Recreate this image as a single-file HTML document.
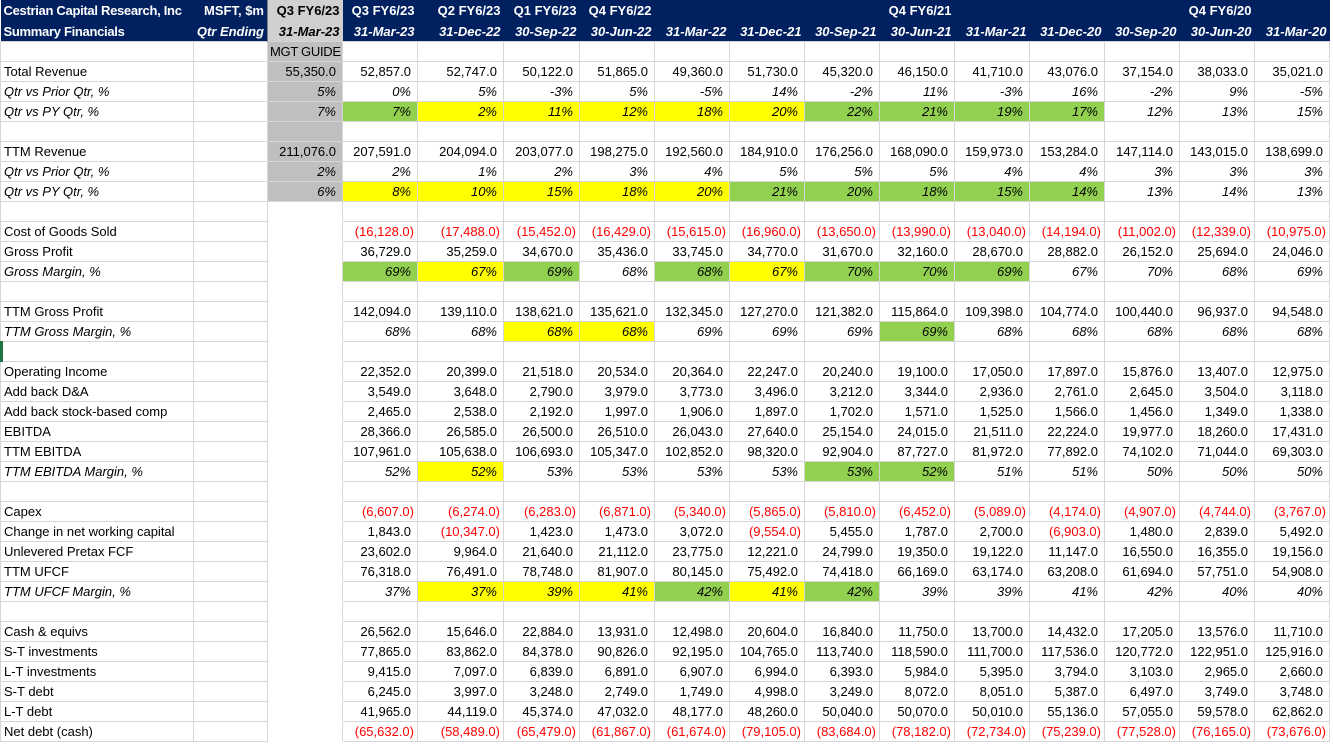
<!DOCTYPE html>
<html><head><meta charset="utf-8">
<style>
html,body{margin:0;padding:0;background:#fff;width:1333px;height:745px;overflow:hidden}
table{border-collapse:collapse;table-layout:fixed;width:1329px;font-family:"Liberation Sans",Arial,sans-serif;font-size:13px;color:#000}
td{border:1px solid #d6d6d6;height:19px;line-height:19px;padding:0 6px 0 2px;text-align:right;white-space:nowrap;overflow:hidden}
td:first-child{text-align:left;padding-left:3px}
tr.h td{background:#002060;color:#fff;font-weight:bold;border:none;padding-right:3px}
tr.h td:first-child{letter-spacing:-0.3px}
tr.h1 td{height:21px;line-height:22px}
tr.h2 td{font-style:italic;line-height:18px}
tr.h td.gh{background:#d0d0d0;color:#000;border-left:1px solid #808080}
td.gb{background:#bfbfbf;border-left:1px solid #808080}
td.gm{text-align:left;padding:0 0 0 2px;letter-spacing:-0.3px}
td.gn{border-left:1px solid #808080;border-top-color:#fff;border-bottom-color:#fff}
tr.i td{font-style:italic}
.g{background:#92d050}
.y{background:#ffff00}
.r{color:#ff0000;padding-right:3px}
#cur{position:absolute;left:0;top:341px;width:3px;height:21px;background:#217346}
</style></head><body>
<div id="cur"></div>
<table>
<colgroup><col style="width:193px"><col style="width:74px"><col style="width:75px"><col style="width:75px"><col style="width:86px"><col style="width:76px"><col style="width:75px"><col style="width:75px"><col style="width:75px"><col style="width:75px"><col style="width:75px"><col style="width:75px"><col style="width:75px"><col style="width:75px"><col style="width:75px"><col style="width:75px"></colgroup>
<tr class="h h1"><td>Cestrian Capital Research, Inc</td><td>MSFT, $m</td><td class="gh">Q3 FY6/23</td><td>Q3 FY6/23</td><td>Q2 FY6/23</td><td>Q1 FY6/23</td><td>Q4 FY6/22</td><td></td><td></td><td></td><td>Q4 FY6/21</td><td></td><td></td><td></td><td>Q4 FY6/20</td><td></td></tr>
<tr class="h h2"><td style="font-style:normal">Summary Financials</td><td>Qtr Ending</td><td class="gh">31-Mar-23</td><td>31-Mar-23</td><td>31-Dec-22</td><td>30-Sep-22</td><td>30-Jun-22</td><td>31-Mar-22</td><td>31-Dec-21</td><td>30-Sep-21</td><td>30-Jun-21</td><td>31-Mar-21</td><td>31-Dec-20</td><td>30-Sep-20</td><td>30-Jun-20</td><td>31-Mar-20</td></tr>
<tr><td></td><td></td><td class="gb gm">MGT GUIDE</td><td></td><td></td><td></td><td></td><td></td><td></td><td></td><td></td><td></td><td></td><td></td><td></td><td></td></tr>
<tr><td>Total Revenue</td><td></td><td class="gb">55,350.0</td><td>52,857.0</td><td>52,747.0</td><td>50,122.0</td><td>51,865.0</td><td>49,360.0</td><td>51,730.0</td><td>45,320.0</td><td>46,150.0</td><td>41,710.0</td><td>43,076.0</td><td>37,154.0</td><td>38,033.0</td><td>35,021.0</td></tr>
<tr class="i"><td>Qtr vs Prior Qtr, %</td><td></td><td class="gb">5%</td><td>0%</td><td>5%</td><td>-3%</td><td>5%</td><td>-5%</td><td>14%</td><td>-2%</td><td>11%</td><td>-3%</td><td>16%</td><td>-2%</td><td>9%</td><td>-5%</td></tr>
<tr class="i"><td>Qtr vs PY Qtr, %</td><td></td><td class="gb">7%</td><td class="g">7%</td><td class="y">2%</td><td class="y">11%</td><td class="y">12%</td><td class="y">18%</td><td class="y">20%</td><td class="g">22%</td><td class="g">21%</td><td class="g">19%</td><td class="g">17%</td><td>12%</td><td>13%</td><td>15%</td></tr>
<tr><td></td><td></td><td class="gb"></td><td></td><td></td><td></td><td></td><td></td><td></td><td></td><td></td><td></td><td></td><td></td><td></td><td></td></tr>
<tr><td>TTM Revenue</td><td></td><td class="gb">211,076.0</td><td>207,591.0</td><td>204,094.0</td><td>203,077.0</td><td>198,275.0</td><td>192,560.0</td><td>184,910.0</td><td>176,256.0</td><td>168,090.0</td><td>159,973.0</td><td>153,284.0</td><td>147,114.0</td><td>143,015.0</td><td>138,699.0</td></tr>
<tr class="i"><td>Qtr vs Prior Qtr, %</td><td></td><td class="gb">2%</td><td>2%</td><td>1%</td><td>2%</td><td>3%</td><td>4%</td><td>5%</td><td>5%</td><td>5%</td><td>4%</td><td>4%</td><td>3%</td><td>3%</td><td>3%</td></tr>
<tr class="i"><td>Qtr vs PY Qtr, %</td><td></td><td class="gb">6%</td><td class="y">8%</td><td class="y">10%</td><td class="y">15%</td><td class="y">18%</td><td class="y">20%</td><td class="g">21%</td><td class="g">20%</td><td class="g">18%</td><td class="g">15%</td><td class="g">14%</td><td>13%</td><td>14%</td><td>13%</td></tr>
<tr><td></td><td></td><td class="gn"></td><td></td><td></td><td></td><td></td><td></td><td></td><td></td><td></td><td></td><td></td><td></td><td></td><td></td></tr>
<tr><td>Cost of Goods Sold</td><td></td><td class="gn"></td><td class="r">(16,128.0)</td><td class="r">(17,488.0)</td><td class="r">(15,452.0)</td><td class="r">(16,429.0)</td><td class="r">(15,615.0)</td><td class="r">(16,960.0)</td><td class="r">(13,650.0)</td><td class="r">(13,990.0)</td><td class="r">(13,040.0)</td><td class="r">(14,194.0)</td><td class="r">(11,002.0)</td><td class="r">(12,339.0)</td><td class="r">(10,975.0)</td></tr>
<tr><td>Gross Profit</td><td></td><td class="gn"></td><td>36,729.0</td><td>35,259.0</td><td>34,670.0</td><td>35,436.0</td><td>33,745.0</td><td>34,770.0</td><td>31,670.0</td><td>32,160.0</td><td>28,670.0</td><td>28,882.0</td><td>26,152.0</td><td>25,694.0</td><td>24,046.0</td></tr>
<tr class="i"><td>Gross Margin, %</td><td></td><td class="gn"></td><td class="g">69%</td><td class="y">67%</td><td class="g">69%</td><td>68%</td><td class="g">68%</td><td class="y">67%</td><td class="g">70%</td><td class="g">70%</td><td class="g">69%</td><td>67%</td><td>70%</td><td>68%</td><td>69%</td></tr>
<tr><td></td><td></td><td class="gn"></td><td></td><td></td><td></td><td></td><td></td><td></td><td></td><td></td><td></td><td></td><td></td><td></td><td></td></tr>
<tr><td>TTM Gross Profit</td><td></td><td class="gn"></td><td>142,094.0</td><td>139,110.0</td><td>138,621.0</td><td>135,621.0</td><td>132,345.0</td><td>127,270.0</td><td>121,382.0</td><td>115,864.0</td><td>109,398.0</td><td>104,774.0</td><td>100,440.0</td><td>96,937.0</td><td>94,548.0</td></tr>
<tr class="i"><td>TTM Gross Margin, %</td><td></td><td class="gn"></td><td>68%</td><td>68%</td><td class="y">68%</td><td class="y">68%</td><td>69%</td><td>69%</td><td>69%</td><td class="g">69%</td><td>68%</td><td>68%</td><td>68%</td><td>68%</td><td>68%</td></tr>
<tr><td></td><td></td><td class="gn"></td><td></td><td></td><td></td><td></td><td></td><td></td><td></td><td></td><td></td><td></td><td></td><td></td><td></td></tr>
<tr><td>Operating Income</td><td></td><td class="gn"></td><td>22,352.0</td><td>20,399.0</td><td>21,518.0</td><td>20,534.0</td><td>20,364.0</td><td>22,247.0</td><td>20,240.0</td><td>19,100.0</td><td>17,050.0</td><td>17,897.0</td><td>15,876.0</td><td>13,407.0</td><td>12,975.0</td></tr>
<tr><td>Add back D&amp;A</td><td></td><td class="gn"></td><td>3,549.0</td><td>3,648.0</td><td>2,790.0</td><td>3,979.0</td><td>3,773.0</td><td>3,496.0</td><td>3,212.0</td><td>3,344.0</td><td>2,936.0</td><td>2,761.0</td><td>2,645.0</td><td>3,504.0</td><td>3,118.0</td></tr>
<tr><td>Add back stock-based comp</td><td></td><td class="gn"></td><td>2,465.0</td><td>2,538.0</td><td>2,192.0</td><td>1,997.0</td><td>1,906.0</td><td>1,897.0</td><td>1,702.0</td><td>1,571.0</td><td>1,525.0</td><td>1,566.0</td><td>1,456.0</td><td>1,349.0</td><td>1,338.0</td></tr>
<tr><td>EBITDA</td><td></td><td class="gn"></td><td>28,366.0</td><td>26,585.0</td><td>26,500.0</td><td>26,510.0</td><td>26,043.0</td><td>27,640.0</td><td>25,154.0</td><td>24,015.0</td><td>21,511.0</td><td>22,224.0</td><td>19,977.0</td><td>18,260.0</td><td>17,431.0</td></tr>
<tr><td>TTM EBITDA</td><td></td><td class="gn"></td><td>107,961.0</td><td>105,638.0</td><td>106,693.0</td><td>105,347.0</td><td>102,852.0</td><td>98,320.0</td><td>92,904.0</td><td>87,727.0</td><td>81,972.0</td><td>77,892.0</td><td>74,102.0</td><td>71,044.0</td><td>69,303.0</td></tr>
<tr class="i"><td>TTM EBITDA Margin, %</td><td></td><td class="gn"></td><td>52%</td><td class="y">52%</td><td>53%</td><td>53%</td><td>53%</td><td>53%</td><td class="g">53%</td><td class="g">52%</td><td>51%</td><td>51%</td><td>50%</td><td>50%</td><td>50%</td></tr>
<tr><td></td><td></td><td class="gn"></td><td></td><td></td><td></td><td></td><td></td><td></td><td></td><td></td><td></td><td></td><td></td><td></td><td></td></tr>
<tr><td>Capex</td><td></td><td class="gn"></td><td class="r">(6,607.0)</td><td class="r">(6,274.0)</td><td class="r">(6,283.0)</td><td class="r">(6,871.0)</td><td class="r">(5,340.0)</td><td class="r">(5,865.0)</td><td class="r">(5,810.0)</td><td class="r">(6,452.0)</td><td class="r">(5,089.0)</td><td class="r">(4,174.0)</td><td class="r">(4,907.0)</td><td class="r">(4,744.0)</td><td class="r">(3,767.0)</td></tr>
<tr><td>Change in net working capital</td><td></td><td class="gn"></td><td>1,843.0</td><td class="r">(10,347.0)</td><td>1,423.0</td><td>1,473.0</td><td>3,072.0</td><td class="r">(9,554.0)</td><td>5,455.0</td><td>1,787.0</td><td>2,700.0</td><td class="r">(6,903.0)</td><td>1,480.0</td><td>2,839.0</td><td>5,492.0</td></tr>
<tr><td>Unlevered Pretax FCF</td><td></td><td class="gn"></td><td>23,602.0</td><td>9,964.0</td><td>21,640.0</td><td>21,112.0</td><td>23,775.0</td><td>12,221.0</td><td>24,799.0</td><td>19,350.0</td><td>19,122.0</td><td>11,147.0</td><td>16,550.0</td><td>16,355.0</td><td>19,156.0</td></tr>
<tr><td>TTM UFCF</td><td></td><td class="gn"></td><td>76,318.0</td><td>76,491.0</td><td>78,748.0</td><td>81,907.0</td><td>80,145.0</td><td>75,492.0</td><td>74,418.0</td><td>66,169.0</td><td>63,174.0</td><td>63,208.0</td><td>61,694.0</td><td>57,751.0</td><td>54,908.0</td></tr>
<tr class="i"><td>TTM UFCF Margin, %</td><td></td><td class="gn"></td><td>37%</td><td class="y">37%</td><td class="y">39%</td><td class="y">41%</td><td class="g">42%</td><td class="y">41%</td><td class="g">42%</td><td>39%</td><td>39%</td><td>41%</td><td>42%</td><td>40%</td><td>40%</td></tr>
<tr><td></td><td></td><td class="gn"></td><td></td><td></td><td></td><td></td><td></td><td></td><td></td><td></td><td></td><td></td><td></td><td></td><td></td></tr>
<tr><td>Cash &amp; equivs</td><td></td><td class="gn"></td><td>26,562.0</td><td>15,646.0</td><td>22,884.0</td><td>13,931.0</td><td>12,498.0</td><td>20,604.0</td><td>16,840.0</td><td>11,750.0</td><td>13,700.0</td><td>14,432.0</td><td>17,205.0</td><td>13,576.0</td><td>11,710.0</td></tr>
<tr><td>S-T investments</td><td></td><td class="gn"></td><td>77,865.0</td><td>83,862.0</td><td>84,378.0</td><td>90,826.0</td><td>92,195.0</td><td>104,765.0</td><td>113,740.0</td><td>118,590.0</td><td>111,700.0</td><td>117,536.0</td><td>120,772.0</td><td>122,951.0</td><td>125,916.0</td></tr>
<tr><td>L-T investments</td><td></td><td class="gn"></td><td>9,415.0</td><td>7,097.0</td><td>6,839.0</td><td>6,891.0</td><td>6,907.0</td><td>6,994.0</td><td>6,393.0</td><td>5,984.0</td><td>5,395.0</td><td>3,794.0</td><td>3,103.0</td><td>2,965.0</td><td>2,660.0</td></tr>
<tr><td>S-T debt</td><td></td><td class="gn"></td><td>6,245.0</td><td>3,997.0</td><td>3,248.0</td><td>2,749.0</td><td>1,749.0</td><td>4,998.0</td><td>3,249.0</td><td>8,072.0</td><td>8,051.0</td><td>5,387.0</td><td>6,497.0</td><td>3,749.0</td><td>3,748.0</td></tr>
<tr><td>L-T debt</td><td></td><td class="gn"></td><td>41,965.0</td><td>44,119.0</td><td>45,374.0</td><td>47,032.0</td><td>48,177.0</td><td>48,260.0</td><td>50,040.0</td><td>50,070.0</td><td>50,010.0</td><td>55,136.0</td><td>57,055.0</td><td>59,578.0</td><td>62,862.0</td></tr>
<tr><td>Net debt (cash)</td><td></td><td class="gn"></td><td class="r">(65,632.0)</td><td class="r">(58,489.0)</td><td class="r">(65,479.0)</td><td class="r">(61,867.0)</td><td class="r">(61,674.0)</td><td class="r">(79,105.0)</td><td class="r">(83,684.0)</td><td class="r">(78,182.0)</td><td class="r">(72,734.0)</td><td class="r">(75,239.0)</td><td class="r">(77,528.0)</td><td class="r">(76,165.0)</td><td class="r">(73,676.0)</td></tr>
</table>
</body></html>
